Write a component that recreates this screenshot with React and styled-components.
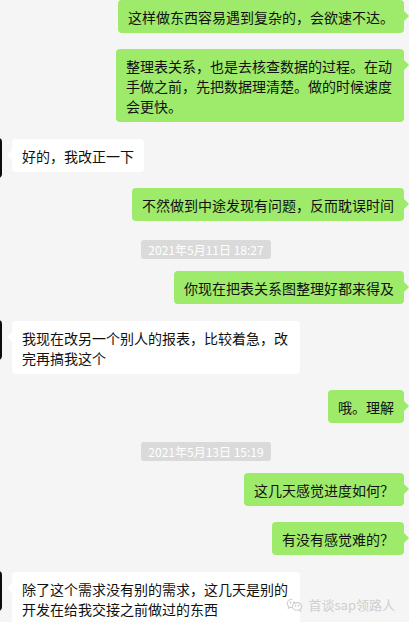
import React from 'react';
import styled, {createGlobalStyle} from 'styled-components';

const GREEN = '#9eea6a';
const BG = '#f5f5f5';

const GlobalStyle = createGlobalStyle`
   html, body {
      margin: 0;
      padding: 0;
      background: ${BG};
      overflow: hidden;
   }
   body {
      font-family: "Noto Sans CJK SC", "Noto Sans", sans-serif;
   }
`;

const ChatWindow = styled.div`
   position: relative;
   height: 622px;
   overflow: hidden;
   background: ${BG};
   display: flex;
   flex-direction: column;
   gap: 16px;
   padding: 0 5px 0 0;
   box-sizing: border-box;
`;

const Row = styled.div`
   display: flex;
   align-items: flex-start;
   gap: 10px;
   justify-content: ${p => (p.$mine ? 'flex-end' : 'flex-start')};
   margin-top: ${p => (p.$mine ? '0' : '1px')};
`;

// only the right edge of the contact's avatar shows at the window edge
const Avatar = styled.div`
   flex: none;
   width: 40px;
   height: 40px;
   margin: -1px 0 -12px -38px;
   border-radius: 4px;
   background: #0c0c0c;
`;

const Bubble = styled.div`
   position: relative;
   box-sizing: border-box;
   max-width: 288px;
   padding: 7px 10px 6px;
   border-radius: 4px;
   background: ${p => (p.$mine ? GREEN : '#ffffff')};
   color: #111;
   font-size: 14px;
   line-height: 20px;
   word-break: break-all;

   &::after {
      content: '';
      position: absolute;
      top: 11px;
      ${p => (p.$mine ? 'right: -5px;' : 'left: -5px;')}
      border-top: 5px solid transparent;
      border-bottom: 5px solid transparent;
      ${p => (p.$mine
         ? `border-left: 5px solid ${GREEN};`
         : 'border-right: 5px solid #ffffff;')}
   }
`;

const TimeRow = styled.div`
   display: flex;
   justify-content: center;
   padding-left: 8px;
   margin: 3px 0 -4px;
`;

const TimeStamp = styled.span`
   padding: 0 7px;
   border-radius: 3px;
   background: #dadada;
   color: #ffffff;
   font-size: 12px;
   line-height: 19px;
`;

const Watermark = styled.div`
   position: absolute;
   right: 14px;
   bottom: 9px;
   display: flex;
   align-items: center;
   gap: 6px;
   color: #cfcfcf;
   font-size: 13px;
   line-height: 16px;
`;

function WechatMark() {
   return (
      <svg width="17" height="14" viewBox="0 0 17 14" fill="none" stroke="#cfcfcf" strokeWidth="1.1">
         <path d="M6.5 1.2c-3 0-5.3 1.9-5.3 4.2 0 1.3.7 2.4 1.8 3.2l-.5 1.6 1.9-1c.6.2 1.3.3 2.1.3"/>
         <path d="M11.2 4.6c-2.7 0-4.8 1.7-4.8 3.8s2.1 3.8 4.8 3.8c.6 0 1.2-.1 1.7-.3l1.6.9-.4-1.4c1-.7 1.6-1.8 1.6-3 0-2.1-2.1-3.8-4.5-3.8z"/>
         <circle cx="4.6" cy="4.6" r=".5" fill="#cfcfcf"/>
         <circle cx="8" cy="4.6" r=".5" fill="#cfcfcf"/>
         <circle cx="9.6" cy="7.8" r=".4" fill="#cfcfcf"/>
         <circle cx="12.6" cy="7.8" r=".4" fill="#cfcfcf"/>
      </svg>
   );
}

const items = [
   {mine: true, text: '这样做东西容易遇到复杂的，会欲速不达。'},
   {mine: true, text: '整理表关系，也是去核查数据的过程。在动手做之前，先把数据理清楚。做的时候速度会更快。'},
   {mine: false, text: '好的，我改正一下'},
   {mine: true, text: '不然做到中途发现有问题，反而耽误时间'},
   {time: '2021年5月11日 18:27'},
   {mine: true, text: '你现在把表关系图整理好都来得及'},
   {mine: false, text: '我现在改另一个别人的报表，比较着急，改完再搞我这个'},
   {mine: true, text: '哦。理解'},
   {time: '2021年5月13日 15:19'},
   {mine: true, text: '这几天感觉进度如何？'},
   {mine: true, text: '有没有感觉难的？'},
   {mine: false, text: '除了这个需求没有别的需求，这几天是别的开发在给我交接之前做过的东西'},
];

export default function App() {
   return (
      <>
         <GlobalStyle/>
         <ChatWindow>
            {items.map((it, i) => {
               if (it.time) {
                  return <TimeRow key={i}><TimeStamp>{it.time}</TimeStamp></TimeRow>;
               }
               return (
                  <Row key={i} $mine={it.mine}>
                     {!it.mine && <Avatar/>}
                     <Bubble $mine={it.mine}>{it.text}</Bubble>
                  </Row>
               );
            })}
            <Watermark><WechatMark/><span>首谈sap领路人</span></Watermark>
         </ChatWindow>
      </>
   );
}
